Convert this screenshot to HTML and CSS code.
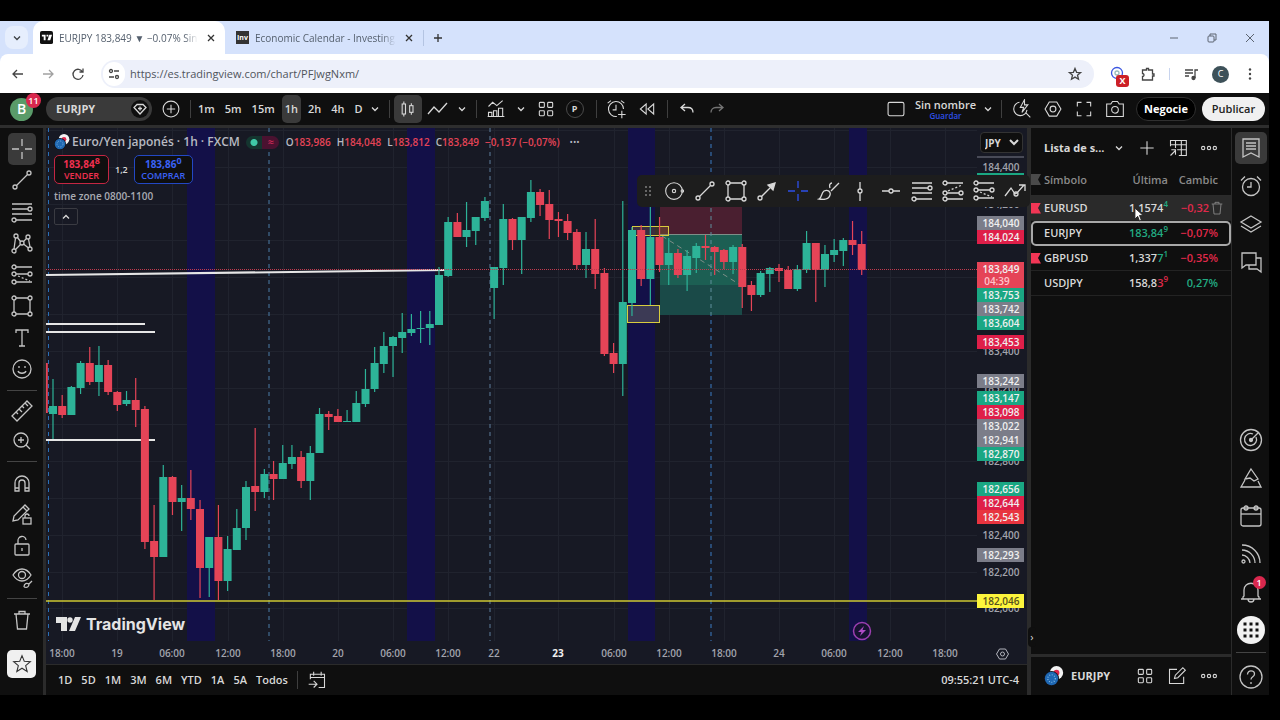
FILE: index.html
```html
<!DOCTYPE html>
<html lang="es">
<head>
  <meta charset="UTF-8" />
  <title>EURJPY 183,849 ▼ −0.07% Sin nombre</title>
  <meta name="viewport" content="width=device-width, initial-scale=1.0" />
  <link rel="stylesheet" href="styles.css">
</head>
<body>
  <svg class="defs" width="0" height="0" aria-hidden="true">
    <symbol id="chev" viewBox="0 0 12 12"><path d="M3 4.5l3 3 3-3" /></symbol>
    <symbol id="i-cross" viewBox="0 0 24 24"><path d="M12 2v7M12 15v7M2 12h7M15 12h7" /></symbol>
    <symbol id="i-line" viewBox="0 0 24 24"><circle cx="5" cy="19" r="2" /><circle cx="19" cy="5" r="2" /><path d="M6.5 17.5l11-11" /></symbol>
    <symbol id="i-fib" viewBox="0 0 24 24"><path d="M2 4h20M2 9h16M2 14h20M6 20h16" /><circle cx="20" cy="9" r="2" /><circle cx="4" cy="20" r="2" /></symbol>
    <symbol id="i-rect" viewBox="0 0 24 24"><path d="M6 4h12M6 20h12M4 6v12M20 6v12" /><circle cx="4" cy="4" r="2" /><circle cx="20" cy="4" r="2" /><circle cx="4" cy="20" r="2" /><circle cx="20" cy="20" r="2" /></symbol>
    <symbol id="i-long" viewBox="0 0 24 24"><circle cx="4" cy="4" r="2" /><circle cx="4" cy="11" r="2" /><circle cx="20" cy="11" r="2" /><circle cx="4" cy="19" r="2" /><path d="M6 4h16M6 11h12M6 19h16" /><path stroke-dasharray="2 2" d="M8 13l12 5" /></symbol>
    <symbol id="i-short" viewBox="0 0 24 24"><circle cx="4" cy="4" r="2" /><circle cx="4" cy="14" r="2" /><circle cx="20" cy="14" r="2" /><circle cx="4" cy="20" r="2" /><path d="M6 4h16M6 14h12M6 20h16" /><path stroke-dasharray="2 2" d="M7 12l14-6" /></symbol>
    <symbol id="i-grid" viewBox="0 0 24 24"><rect x="4" y="4" width="6" height="6" rx="1" /><rect x="14" y="4" width="6" height="6" rx="1" /><rect x="4" y="14" width="6" height="6" rx="1" /><rect x="14" y="14" width="6" height="6" rx="1" /></symbol>
    <symbol id="i-hex" viewBox="0 0 24 24"><path d="M7.500 3.500h9l5 8.500-5 8.500h-9l-5-8.500z" /><circle cx="12" cy="12" r="3.500" /></symbol>
    <symbol id="i-dots" viewBox="0 0 24 24"><circle cx="5" cy="12" r="2" /><circle cx="12" cy="12" r="2" /><circle cx="19" cy="12" r="2" /></symbol>
    <symbol id="i-trash" viewBox="0 0 24 24"><path d="M4 6h16M9 6V3.500h6V6M6 6l1.500 15h9L18 6" /></symbol>
    <symbol id="i-alarm" viewBox="0 0 24 24"><circle cx="12" cy="13" r="8.500" /><path d="M12 8v5H8M2 6.500L6 2.500M22 6.500L18 2.500" /></symbol>
    <symbol id="i-pair" viewBox="0 0 24 24"><g stroke="none"><circle cx="15" cy="8" r="8" fill="#f3f3f3" /><circle cx="15" cy="8" r="3.500" fill="#e0294f" /><circle cx="9" cy="15" r="9" fill="#10131c" /><circle cx="9" cy="15" r="8" fill="#1f68b3" /></g><circle cx="9" cy="15" r="4.500" fill="none" stroke="#9fd0ee" stroke-dasharray="1 2" /></symbol>
  </svg>

  <div class="window">
    <header class="tabstrip">
      <button class="tab-search" aria-label="Buscar pestañas"><svg class="icon s12"><use href="#chev" /></svg></button>
      <div class="tab active">
        <svg class="favicon" viewBox="0 0 14 14"><rect width="14" height="14" rx="2" fill="#111" /><path fill="#fff" d="M2 4h4v6H4V6H2zM7 4h2v2H7zM10 4h3l-2 6H8z" /></svg>
        <span class="tab-title">EURJPY 183,849 ▼ −0.07% Sin</span>
        <button class="tab-close" aria-label="Cerrar"><svg class="icon s12" viewBox="0 0 12 12"><path d="M3 3l6 6M9 3l-6 6" /></svg></button>
      </div>
      <div class="tab">
        <span class="favicon inv">Inv</span>
        <span class="tab-title">Economic Calendar - Investing.</span>
        <button class="tab-close" aria-label="Cerrar"><svg class="icon s12" viewBox="0 0 12 12"><path d="M3 3l6 6M9 3l-6 6" /></svg></button>
      </div>
      <button class="tab-new" aria-label="Nueva pestaña"><svg class="icon s12" viewBox="0 0 12 12"><path d="M6 2v8M2 6h8" /></svg></button>
      <div class="win-controls">
        <button aria-label="Minimizar"><svg class="icon s12" viewBox="0 0 12 12"><path d="M2 6h8" /></svg></button>
        <button aria-label="Restaurar"><svg class="icon s12" viewBox="0 0 12 12"><rect x="2" y="4" width="6" height="6" rx="1" /><path d="M4 4V2h6v6H8" /></svg></button>
        <button aria-label="Cerrar ventana"><svg class="icon s12" viewBox="0 0 12 12"><path d="M2 2l8 8M10 2l-8 8" /></svg></button>
      </div>
    </header>

    <div class="navbar">
      <button aria-label="Atrás"><svg class="icon s16" viewBox="0 0 16 16"><path d="M13 8H3M7 4L3 8l4 4" /></svg></button>
      <button class="dim" aria-label="Adelante"><svg class="icon s16" viewBox="0 0 16 16"><path d="M3 8h10M9 4l4 4-4 4" /></svg></button>
      <button aria-label="Recargar"><svg class="icon s16" viewBox="0 0 16 16"><path d="M12.500 6A5 5 0 1 0 13 9M13 2.500V6H9.500" /></svg></button>
      <div class="omnibox">
        <span class="site-info"><svg class="icon s16" viewBox="0 0 16 16"><circle cx="5" cy="5" r="1.500" /><path d="M8 5h5M3 11h5" /><circle cx="11" cy="11" r="1.500" /></svg></span>
        <input type="text" aria-label="Dirección" value="https://es.tradingview.com/chart/PFJwgNxm/" />
        <button aria-label="Favorito"><svg class="icon s16" viewBox="0 0 16 16"><path d="M8 2.500l1.600 3.800 4 .3-3.100 2.600 1 4L8 11.100l-3.500 2.100 1-4L2.400 6.600l4-.3z" /></svg></button>
      </div>
      <div class="extensions">
        <button class="ext" aria-label="Extensión"><svg class="icon s16" viewBox="0 0 16 16"><circle cx="7" cy="7" r="5.500" stroke="#3a55e0" /><circle cx="7" cy="7" r="2" stroke="#9bb" /></svg><b>X</b></button>
        <button aria-label="Extensiones"><svg class="icon s16" viewBox="0 0 16 16"><path d="M2.500 4h4V2.500h2V4h4v4H14v2h-1.500v4h-10v-3.500c2 0 2-3 0-3z" /></svg></button>
        <i></i>
        <button aria-label="Medios"><svg class="icon s16" viewBox="0 0 16 16"><path d="M2 4h8M2 7h8M2 10h4M12 12V4h3" /><circle cx="10.500" cy="12" r="1.500" fill="currentColor" /></svg></button>
        <button class="profile" aria-label="Perfil">C</button>
        <button aria-label="Menú"><svg class="icon s16" viewBox="0 0 16 16"><g fill="currentColor" stroke="none"><circle cx="8" cy="3.500" r="1.200" /><circle cx="8" cy="8" r="1.200" /><circle cx="8" cy="12.500" r="1.200" /></g></svg></button>
      </div>
    </div>

    <div class="topbar">
      <button class="avatar" aria-label="Menú de usuario">B<span class="badge">11</span></button>
      <button class="symbol">EURJPY <span class="gem"><svg class="icon s16" viewBox="0 0 16 16"><path d="M5 3.500h6l3 3-6 6.500-6-6.500z" /><path d="M8 5.500v4M6 7.500h4" /></svg></span></button>
      <button class="tb wide" aria-label="Comparar"><svg class="icon s20" viewBox="0 0 24 24"><circle cx="12" cy="12" r="9.500" /><path d="M12 7v10M7 12h10" /></svg></button>
      <i class="vsep"></i>
      <div class="intervals">
        <button>1m</button><button>5m</button><button>15m</button><button class="on">1h</button><button>2h</button><button>4h</button><button>D</button>
      </div>
      <button class="tb chev" aria-label="Intervalos"><svg class="icon s12"><use href="#chev" /></svg></button>
      <i class="vsep"></i>
      <button class="tb on" aria-label="Velas"><svg class="icon s20" viewBox="0 0 24 24"><rect x="5" y="6" width="4" height="12" /><path d="M7 3v3M7 18v3M16 5v3M16 16v3" /><rect x="14" y="8" width="4" height="8" /></svg></button>
      <button class="tb wide" aria-label="Línea"><svg class="icon s24" viewBox="0 0 24 24"><path d="M3 17l6-7 5 5 8-9" /></svg></button>
      <button class="tb chev" aria-label="Tipos"><svg class="icon s12"><use href="#chev" /></svg></button>
      <i class="vsep"></i>
      <button class="tb wide" aria-label="Indicadores"><svg class="icon s20" viewBox="0 0 24 24"><path d="M3 9l5-5 5 4 7-6M3 21v-5h4v5zM9 21v-7h4v7zM15 21V11h5v10zM2 21h20" /></svg></button>
      <button class="tb chev" aria-label="Favoritos"><svg class="icon s12"><use href="#chev" /></svg></button>
      <button class="tb wide" aria-label="Diseños"><svg class="icon s20"><use href="#i-grid" /></svg></button>
      <button class="pbtn">P</button>
      <i class="vsep"></i>
      <button class="tb wide" aria-label="Alerta"><svg class="icon s20" viewBox="0 0 24 24"><path d="M13 21A9 9 0 1 1 21 12M12 7v6H8M2 5l4-3M22 5l-4-3M19 14v9M14.500 18.500h9" /></svg></button>
      <button class="tb wide" aria-label="Repetición"><svg class="icon s20" viewBox="0 0 24 24"><path d="M11 6v12l-7-6zM20 6v12l-7-6z" /></svg></button>
      <i class="vsep"></i>
      <button class="tb wide" aria-label="Deshacer"><svg class="icon s16" viewBox="0 0 16 16"><path d="M6 3L2 6.500 6 10M2.500 6.500H9c3 0 5 2 5 5" /></svg></button>
      <button class="tb dim" aria-label="Rehacer"><svg class="icon s16" viewBox="0 0 16 16"><path d="M10 3l4 3.500L10 10M13.500 6.500H7c-3 0-5 2-5 5" /></svg></button>
      <div class="topbar-right">
        <button class="tb" aria-label="Diseño"><svg class="icon s20" viewBox="0 0 24 24"><rect x="2.500" y="4" width="19" height="16" rx="2" /></svg></button>
        <button class="layout-name">Sin nombre<small>Guardar</small></button>
        <button class="tb chev" aria-label="Gestionar diseños"><svg class="icon s12"><use href="#chev" /></svg></button>
        <i class="vsep"></i>
        <button class="tb wide" aria-label="Búsqueda rápida"><svg class="icon s20" viewBox="0 0 24 24"><path d="M9 4a8 8 0 1 0 9 9M17 17l5 5M15 1l-5 9h4l-2 6 7-9h-4z" /></svg></button>
        <button class="tb wide" aria-label="Configuración"><svg class="icon s20"><use href="#i-hex" /></svg></button>
        <button class="tb wide" aria-label="Pantalla completa"><svg class="icon s20" viewBox="0 0 24 24"><path d="M4 9V4h5M15 4h5v5M20 15v5h-5M9 20H4v-5" /></svg></button>
        <button class="tb wide" aria-label="Captura"><svg class="icon s20" viewBox="0 0 24 24"><path d="M2 6h5l2-3h6l2 3h5v15H2z" /><circle cx="12" cy="13" r="4" /></svg></button>
        <button class="pill dark">Negocie</button>
        <button class="pill light">Publicar</button>
      </div>
    </div>

    <div class="workspace">
      <nav class="drawbar">
        <div class="tools g8">
          <button class="on" aria-label="Cruz"><svg class="icon s24"><use href="#i-cross" /></svg></button>
          <button aria-label="Línea de tendencia"><svg class="icon s24"><use href="#i-line" /></svg></button>
          <button aria-label="Fibonacci"><svg class="icon s24"><use href="#i-fib" /></svg></button>
          <button aria-label="Patrones"><svg class="icon s24" viewBox="0 0 24 24"><circle cx="6" cy="5" r="2" /><circle cx="18" cy="6" r="2" /><circle cx="4" cy="20" r="2" /><circle cx="20" cy="18" r="2" /><circle cx="12" cy="12" r="2" /><path d="M5.500 7L4 18M7.500 6.500l3 4M16.500 7.500l-3 3M18.500 8l1.500 8M5.500 18.500l5-5M13.500 13l5 4" /></svg></button>
          <button aria-label="Posición"><svg class="icon s24"><use href="#i-long" /></svg></button>
          <button aria-label="Rectángulo"><svg class="icon s24"><use href="#i-rect" /></svg></button>
          <button aria-label="Texto"><svg class="icon s24" viewBox="0 0 24 24"><path d="M6 7V4h12v3M12 4v16M9 20h6" /></svg></button>
          <button aria-label="Emoji"><svg class="icon s24" viewBox="0 0 24 24"><circle cx="12" cy="12" r="9" /><path d="M9 9v2M15 9v2M8 14c1 3 7 3 8 0" /></svg></button>
        </div>
        <hr>
        <div class="tools g2">
          <button aria-label="Medir"><svg class="icon s24" viewBox="0 0 24 24"><path d="M2 17L17 2l5 5L7 22zM6 13l2 2M9 10l3 3M12 7l2 2M15 4l3 3" /></svg></button>
          <button aria-label="Acercar"><svg class="icon s24" viewBox="0 0 24 24"><circle cx="11" cy="11" r="7" /><path d="M16 16l4 4M11 8v6M8 11h6" /></svg></button>
        </div>
        <hr>
        <div class="tools g4">
          <button aria-label="Imán"><svg class="icon s24" viewBox="0 0 24 24"><path d="M5 20v-8a7 7 0 0 1 14 0v8h-4v-8a3 3 0 0 0-6 0v8zM5 17h4M15 17h4" /></svg></button>
          <button aria-label="Modo dibujo"><svg class="icon s24" viewBox="0 0 24 24"><path d="M3 19l1-5L15 3l4 4L8 18zM13 5l4 4" /><rect x="13" y="16" width="8" height="6" /><path d="M15 16v-2a2 2 0 0 1 4 0" /></svg></button>
          <button aria-label="Bloquear"><svg class="icon s24" viewBox="0 0 24 24"><rect x="5" y="10" width="14" height="11" rx="1" /><path d="M8 10V7a4 4 0 0 1 8-1M12 14v3" /></svg></button>
          <button aria-label="Ocultar"><svg class="icon s24" viewBox="0 0 24 24"><path d="M3 10c5-8 13-8 18 0-5 8-13 8-18 0z" /><circle cx="12" cy="10" r="3.500" /><path d="M14 22c0-4 3-4 5-3l3-3M14 22c3 1 5 0 5-3" /></svg></button>
        </div>
        <hr>
        <div class="tools g1"><button aria-label="Eliminar"><svg class="icon s24"><use href="#i-trash" /></svg></button></div>
        <button class="fav" aria-label="Favoritos"><svg class="icon s20" viewBox="0 0 24 24"><path d="M12 2l2.700 6.700 7.300.5-5.600 4.700 1.800 7.100-6.200-3.900L5.800 21l1.800-7.100L2 9.200l7.300-.5z" /></svg></button>
      </nav>

      <main class="chart-col">
        <div class="chart">
          <svg id="chart" viewBox="46 128 981 536" role="img" aria-label="Gráfico EURJPY 1h"></svg>

          <div class="legend">
            <div class="legend-row">
              <svg class="icon s16"><use href="#i-pair" /></svg>
              <span class="legend-title">Euro/Yen japonés · 1h · FXCM</span>
              <span class="status"><i class="dot"></i><i class="wave">≈</i></span>
              <span class="ohlc">O<b>183,986</b></span>
              <span class="ohlc">H<b>184,048</b></span>
              <span class="ohlc">L<b>183,812</b></span>
              <span class="ohlc">C<b>183,849</b></span>
              <span class="ohlc"><b>−0,137 (−0,07%)</b></span>
              <span class="more">•••</span>
            </div>
            <div class="trade-row">
              <button class="trade sell"><b>183,84<sup>8</sup></b>VENDER</button>
              <span>1,2</span>
              <button class="trade buy"><b>183,86<sup>0</sup></b>COMPRAR</button>
            </div>
            <span class="study">time zone 0800-1100</span>
            <button class="collapse" aria-label="Contraer"><svg class="icon s12" viewBox="0 0 12 12"><path d="M3 7.500l3-3 3 3" /></svg></button>
          </div>

          <select class="currency" aria-label="Moneda"><option>JPY</option></select>

          <div class="floatbar">
            <span class="grip"></span>
            <button aria-label="Círculo"><svg class="icon s20" viewBox="0 0 24 24"><circle cx="12" cy="12" r="10" /><circle cx="12" cy="12" r="2" /><circle cx="22" cy="12" r="1.500" /></svg></button>
            <button aria-label="Línea"><svg class="icon s24"><use href="#i-line" /></svg></button>
            <button aria-label="Rectángulo"><svg class="icon s24"><use href="#i-rect" /></svg></button>
            <button aria-label="Flecha"><svg class="icon s24" viewBox="0 0 24 24"><circle cx="5" cy="19" r="2" /><path d="M6.500 17.500L15 9" /><path fill="currentColor" d="M20 4l-2 7-5-5z" /></svg></button>
            <button class="blue" aria-label="Cruz"><svg class="icon s24"><use href="#i-cross" /></svg></button>
            <button aria-label="Pincel"><svg class="icon s24" viewBox="0 0 24 24"><path d="M2 20c3-1 2-6 5-8 4-2 7 1 6 4-1 4-6 5-11 4zM13 9c-1-3 0-5 2-5M14 12l8-8" /></svg></button>
            <button aria-label="Línea vertical"><svg class="icon s24" viewBox="0 0 24 24"><path d="M12 3v7M12 14v8" /><circle cx="12" cy="12" r="2" /></svg></button>
            <button aria-label="Línea horizontal"><svg class="icon s24" viewBox="0 0 24 24"><path d="M3 12h7M14 12h7" /><circle cx="12" cy="12" r="2" /></svg></button>
            <button aria-label="Fibonacci"><svg class="icon s24"><use href="#i-fib" /></svg></button>
            <button aria-label="Posición larga"><svg class="icon s24"><use href="#i-short" /></svg></button>
            <button aria-label="Posición corta"><svg class="icon s24"><use href="#i-long" /></svg></button>
            <button aria-label="Trayectoria"><svg class="icon s24" viewBox="0 0 24 24"><path d="M2 17l6-8 4 6 2-1 7-8M16 6h6v6" /><circle cx="13" cy="15" r="2" /></svg></button>
          </div>

          <div class="brand">
            <svg viewBox="0 0 25 14"><path d="M0 0h11v14H5V6H0zM19 0h6l-6 14h-6z" /><circle cx="14" cy="3" r="2.700" /></svg>
            TradingView
          </div>
        </div>

        <div class="rangebar">
          <button>1D</button><button>5D</button><button>1M</button><button>3M</button><button>6M</button><button>YTD</button><button>1A</button><button>5A</button><button>Todos</button>
          <i class="vsep"></i>
          <button aria-label="Ir a fecha"><svg class="icon s20" viewBox="0 0 24 24"><path d="M4 11V5h17v16h-7M4 9h17M8 2v5M17 2v5M2 17h9M8 13l4 4-4 4" /></svg></button>
          <time>09:55:21 UTC-4</time>
        </div>
      </main>

      <aside class="watchlist">
        <button class="handle" aria-label="Plegar panel">›</button>
        <div class="wl-head">
          <button class="wl-name">Lista de s...</button>
          <button aria-label="Listas"><svg class="icon s12"><use href="#chev" /></svg></button>
          <button aria-label="Añadir"><svg class="icon s20" viewBox="0 0 24 24"><path d="M12 4v16M4 12h16" /></svg></button>
          <button aria-label="Tabla"><svg class="icon s20" viewBox="0 0 24 24"><path d="M3 10V3h19v18h-9M3 8h19M9 3v9M16 3v18M11 14h11M3 21l6-6M4 14h5v6" /></svg></button>
          <button aria-label="Más"><svg class="icon s20"><use href="#i-dots" /></svg></button>
        </div>
        <table>
          <thead>
            <tr><th class="flag grey"><i></i></th><th class="sym">Símbolo</th><th>Última</th><th class="chg">Cambic</th></tr>
          </thead>
          <tbody>
            <tr class="hover"><td class="flag"><i></i></td><td class="sym">EURUSD</td><td>1,1574<sup class="up">4</sup></td><td class="chg down"><span>−0,32</span><button class="del" aria-label="Quitar"><svg class="icon s16"><use href="#i-trash" /></svg></button></td></tr>
            <tr class="selected"><td></td><td class="sym">EURJPY</td><td class="up">183,84<sup>9</sup></td><td class="chg down">−0,07%</td></tr>
            <tr><td class="flag"><i></i></td><td class="sym">GBPUSD</td><td>1,337<span class="up">7<sup>1</sup></span></td><td class="chg down">−0,35%</td></tr>
            <tr><td></td><td class="sym">USDJPY</td><td>158,8<span class="down">3<sup>9</sup></span></td><td class="chg up">0,27%</td></tr>
          </tbody>
        </table>
        <svg class="cursor" viewBox="0 0 12 16"><path fill="#fff" stroke="#222" d="M1 1v12l3-3 2 5 2-1-2-5h4z" /></svg>
        <div class="wl-foot">
          <svg class="icon s20"><use href="#i-pair" /></svg>
          <span class="wl-foot-name">EURJPY</span>
          <button aria-label="Cuadrícula"><svg class="icon s20"><use href="#i-grid" /></svg></button>
          <button aria-label="Notas"><svg class="icon s20" viewBox="0 0 24 24"><path d="M12 4H3v17h17v-8M9 15l1-4 9-9 3 3-9 9z" /></svg></button>
          <button aria-label="Más"><svg class="icon s20"><use href="#i-dots" /></svg></button>
        </div>
      </aside>

      <nav class="sidebar">
        <div class="side-group">
          <button class="on" aria-label="Lista"><svg class="icon s24" viewBox="0 0 24 24"><path d="M4 3h16v18l-8-4-8 4zM7 7h10M7 10h10M7 13h10" /></svg></button>
          <button aria-label="Alertas"><svg class="icon s24"><use href="#i-alarm" /></svg></button>
          <button aria-label="Capas"><svg class="icon s24" viewBox="0 0 24 24"><path d="M12 4l10 6-10 6L2 10zM2 14l10 6 10-6" /></svg></button>
          <button aria-label="Chat"><svg class="icon s24" viewBox="0 0 24 24"><path d="M3 3h14v12H7l-4 3zM17 8h5v14l-4-3h-8v-4" /></svg></button>
        </div>
        <div class="side-group bottom">
          <button aria-label="Screeners"><svg class="icon s24" viewBox="0 0 24 24"><circle cx="12" cy="12" r="10.500" /><path d="M17 9a6 6 0 1 1-3-3M12 12l8-8" /><circle cx="12" cy="12" r="1.500" fill="currentColor" /></svg></button>
          <button aria-label="Pine"><svg class="icon s24" viewBox="0 0 24 24"><path d="M12 3l7 10-4 2-4-3-5 1zM6 14l-4 7h20l-3-6" /></svg></button>
          <button aria-label="Calendario"><svg class="icon s24" viewBox="0 0 24 24"><rect x="2" y="4" width="20" height="18" rx="2" /><path d="M2 10h20" /><circle cx="7" cy="4" r="2" /><circle cx="17" cy="4" r="2" /></svg></button>
          <button aria-label="Noticias"><svg class="icon s24" viewBox="0 0 24 24"><path d="M3 3c10 0 18 8 18 18M3 8c7 0 13 6 13 13M3 13c4 0 8 4 8 8" /><circle cx="4.500" cy="19.500" r="1.500" /></svg></button>
          <button aria-label="Notificaciones"><svg class="icon s24" viewBox="0 0 24 24"><path d="M2 19h20M4 19v-2l1-1v-6c0-9 14-9 14 0v6l1 1v2M9 19c0 4 6 4 6 0" /></svg><span class="badge">1</span></button>
          <button class="apps" aria-label="Productos"><svg viewBox="0 0 28 28"><circle cx="14" cy="14" r="14" fill="#f2f2f2" /><path stroke="#111" stroke-width="3" stroke-dasharray="3 3" d="M6.500 8h15M6.500 14h15M6.500 20h15" /></svg></button>
        </div>
        <hr>
        <button class="help" aria-label="Ayuda"><svg class="icon s24" viewBox="0 0 24 24"><circle cx="12" cy="12" r="11" /><path d="M8.500 9.500c0-5 7-4.500 7-.5 0 3-3.500 2.500-3.500 5.500M12 17v2" /></svg></button>
      </nav>
    </div>
  </div>

  <script src="script.js"></script>
</body>
</html>
```

FILE: styles.css
```css
* {
  box-sizing: border-box;
  margin: 0;
  padding: 0;
}

body {
  background: #000;
  color: #d8d8d8;
  font-family: "Trebuchet MS", "Open Sans", sans-serif;
  font-size: 11px;
  line-height: 16px;
  min-height: 100vh;
  padding: 21px 11px 25px 0;
  display: flex;
}

button, input, select {
  font: inherit;
  color: inherit;
  background: none;
  border: none;
}

button {
  display: flex;
  align-items: center;
  justify-content: center;
  cursor: pointer;
}

.defs {
  position: absolute;
}

.icon {
  fill: none;
  stroke: currentColor;
  stroke-width: 1.3;
  flex: none;
  display: block;
}

.s12 { width: 12px; height: 12px; }
.s16 { width: 16px; height: 16px; }
.s20 { width: 20px; height: 20px; }
.s24 { width: 24px; height: 24px; }

.window {
  flex: 1;
  min-width: 0;
  display: flex;
  flex-direction: column;
}

/* browser tabs */
.tabstrip {
  height: 33px;
  background: #d5e2fc;
  display: flex;
  align-items: center;
  padding-left: 5px;
  color: #3c4043;
  font-family: "Open Sans", sans-serif;
}

.tab-search {
  width: 23px;
  height: 23px;
  border-radius: 8px;
  background: #e6eefd;
}

.tab {
  display: flex;
  align-items: center;
  gap: 6px;
  height: 28px;
  width: 198px;
  padding: 0 7px 0 11px;
  color: #55606e;
  font-size: 10px;
}

.tab.active {
  width: 192px;
  height: 33px;
  padding: 0 7px;
  margin: 0 0 0 5px;
  background: #fff;
  border-radius: 10px 10px 0 0;
}

.tab-title {
  flex: 1;
  overflow: hidden;
  white-space: nowrap;
  mask-image: linear-gradient(90deg, #000 90%, transparent);
}

.favicon {
  width: 13px;
  height: 13px;
  flex: none;
}

.favicon.inv {
  background: #333;
  color: #fff;
  font-size: 7px;
  line-height: 13px;
  font-weight: 700;
  text-align: center;
}

.tab-close, .tab-new {
  color: #333;
  width: 14px;
  height: 16px;
}

.tab-new {
  border-left: 1px solid #b4c4e2;
  width: 28px;
}

.win-controls {
  margin-left: auto;
  display: flex;
  color: #5c6470;
}

.win-controls button {
  width: 38px;
}

.win-controls .icon {
  stroke-width: 1;
}

/* address bar */
.navbar {
  height: 39px;
  background: #fff;
  color: #444;
  display: flex;
  align-items: center;
  padding: 1px 0 0 3px;
  border-radius: 8px 8px 0 0;
  box-shadow: 0 -8px #d5e2fc;
  font-family: "Open Sans", sans-serif;
}

.tabstrip {
  position: relative;
}

.navbar > button {
  width: 30px;
  height: 28px;
}

.dim {
  opacity: 0.5;
}

.omnibox {
  flex: 1;
  height: 28px;
  margin-left: 8px;
  border-radius: 14px;
  background: #edf0fa;
  display: flex;
  align-items: center;
  padding: 0 11px 0 2px;
}

.site-info {
  width: 22px;
  height: 24px;
  border-radius: 12px;
  background: #fff;
  display: flex;
  align-items: center;
  justify-content: center;
}

.omnibox input {
  flex: 1;
  padding-left: 5px;
  color: #50545c;
}

.extensions {
  display: flex;
  align-items: center;
  padding-left: 9px;
}

.extensions button {
  width: 30px;
  height: 24px;
  position: relative;
}

.extensions i {
  width: 1px;
  height: 12px;
  margin: 0 6px;
  background: #c8d4ee;
}

.ext b {
  position: absolute;
  right: 4px;
  bottom: -1px;
  width: 13px;
  height: 12px;
  border-radius: 3px;
  background: #cc2027;
  color: #fff;
  font-size: 9px;
  line-height: 12px;
}

.extensions .profile {
  width: 17px;
  height: 17px;
  margin: 0 6px;
  border-radius: 50%;
  background: #3d5159;
  color: #fff;
  font-size: 9px;
}

.extensions button:last-child {
  margin: 0 4px 0 0;
}

/* chart header */
.topbar {
  height: 35px;
  background: #0f0f0f;
  border-bottom: 3px solid #2e2e2e;
  display: flex;
  align-items: center;
  padding: 0 4px 0 10px;
}

.avatar {
  position: relative;
  width: 23px;
  height: 23px;
  margin-right: 13px;
  border-radius: 50%;
  background: #5a9b69;
  color: #fff;
  font-size: 14px;
  font-weight: 600;
}

.badge {
  position: absolute;
  left: 16px;
  top: -5px;
  min-width: 15px;
  height: 15px;
  border-radius: 8px;
  background: #d9284e;
  color: #fff;
  font-size: 9px;
  line-height: 15px;
  font-weight: 600;
}

.symbol {
  width: 106px;
  height: 24px;
  margin-right: 3px;
  padding: 0 3px 0 10px;
  border-radius: 12px;
  background: #3a3a3a;
  justify-content: space-between;
  font-weight: 700;
}

.gem {
  width: 18px;
  height: 18px;
  border-radius: 50%;
  background: #0f0f0f;
  display: flex;
  align-items: center;
  justify-content: center;
}

.tb {
  width: 28px;
  height: 28px;
}

.tb.wide {
  width: 31px;
}

.tb.chev {
  width: 19px;
}

.on {
  background: #3a3a3a;
  border-radius: 5px;
}

.vsep {
  width: 1px;
  height: 18px;
  margin: 0 4px;
  background: #3f3f3f;
  flex: none;
}

.intervals {
  display: flex;
  gap: 4px;
  font-weight: 600;
}

.intervals button {
  height: 28px;
  padding: 0 3px;
}

.pbtn {
  width: 18px;
  height: 18px;
  margin: 0 8px 0 4px;
  border: 1px solid #4a4a4a;
  border-radius: 50%;
  font-size: 9px;
  font-weight: 700;
}

.topbar-right {
  margin-left: auto;
  display: flex;
  align-items: center;
}

.layout-name {
  flex-direction: column;
  margin: 0 2px 0 5px;
  font-weight: 600;
  line-height: 12px;
}

.layout-name small {
  color: #2d4fe8;
  font-size: 8px;
  line-height: 9px;
  font-weight: 600;
}

.pill {
  height: 24px;
  width: 63px;
  border-radius: 12px;
  margin-left: 6px;
}

.pill.dark {
  width: 60px;
  background: #000;
  border: 1px solid #303030;
  color: #fff;
  font-weight: 700;
}

.pill.light {
  background: #f0f0f0;
  color: #222;
  font-weight: 600;
}

/* body */
.workspace {
  flex: 1;
  display: flex;
  min-height: 0;
}

.drawbar {
  width: 46px;
  background: #0f0f0f;
  border-right: 3px solid #2b2b2b;
  padding-top: 5px;
  display: flex;
  flex-direction: column;
  align-items: center;
  color: #c4c4c4;
}

.tools {
  display: flex;
  flex-direction: column;
}

.tools button {
  flex: 1;
  width: 28px;
}

.g8 { height: 252px; }
.g2 { height: 60px; }
.g4 { height: 126px; }
.g1 { height: 32px; }

.drawbar hr, .sidebar hr {
  width: 30px;
  height: 1px;
  margin: 5px 0;
  border: none;
  background: #444;
}

.fav {
  width: 29px;
  height: 28px;
  margin-top: 14px;
  border-radius: 5px;
  background: #f0f0f0;
  color: #333;
}

.chart-col {
  flex: 1;
  min-width: 0;
  display: flex;
  flex-direction: column;
}

.chart {
  flex: 1;
  min-height: 0;
  position: relative;
  background: #171924;
}

#chart {
  display: block;
  width: 100%;
  height: 100%;
}

#chart text {
  font-size: 10px;
  font-weight: 600;
  fill: #a2a4ad;
  text-anchor: middle;
}

#chart .strong {
  font-weight: 700;
  fill: #f0f0f0;
}

#chart .tag {
  fill: #f0f0f0;
}

#chart .countdown {
  fill: #ffc4cb;
}

#chart .dark {
  fill: #55511c;
}

.legend {
  position: absolute;
  left: 8px;
  top: 5px;
  display: flex;
  flex-direction: column;
  align-items: flex-start;
}

.legend-row {
  display: flex;
  align-items: center;
  gap: 6px;
  height: 18px;
  white-space: nowrap;
  color: #b8bac2;
}

.legend-row > .icon {
  margin-right: -4px;
}

.legend-title {
  font-size: 12px;
  font-weight: 600;
}

.status {
  width: 33px;
  height: 13px;
  margin-right: 1px;
  border-radius: 7px;
  overflow: hidden;
  display: flex;
}

.status i {
  flex: 1;
  font-style: normal;
  line-height: 12px;
  text-align: center;
}

.dot {
  background: radial-gradient(circle, #3fc8a6 3px, #14352f 4px);
}

.wave {
  background: #4a1230;
  color: #e0305f;
}

.ohlc {
  font-size: 10px;
  font-weight: 600;
}

.ohlc b {
  font-weight: 600;
  color: #e54457;
}

.more {
  margin-left: 4px;
  font-size: 9px;
}

.trade-row {
  display: flex;
  align-items: center;
  gap: 6px;
  margin-top: 4px;
  font-size: 9px;
  font-weight: 600;
}

.trade {
  width: 55px;
  height: 29px;
  flex-direction: column;
  border: 1px solid #c42643;
  border-radius: 5px;
  background: #0f0f0f;
  color: #f0304f;
  line-height: 12px;
}

.trade b {
  font-size: 10px;
  font-weight: 700;
}

.trade sup {
  font-size: 9px;
  line-height: 0;
}

.trade.buy {
  width: 59px;
  border-color: #2348c4;
  color: #3b62f5;
}

.study {
  margin-top: 4px;
  font-size: 10px;
  font-weight: 600;
  color: #a9abb3;
}

.collapse {
  width: 24px;
  height: 17px;
  margin-top: 4px;
  border: 1px solid #3a3b42;
  border-radius: 2px;
}

.currency {
  position: absolute;
  right: 4px;
  top: 4px;
  width: 43px;
  height: 21px;
  border: 1px solid #333;
  border-radius: 4px;
  background: #0f0f0f;
  font-size: 10px;
  font-weight: 700;
}

.floatbar {
  position: absolute;
  right: -3px;
  top: 47px;
  height: 32px;
  padding-left: 7px;
  display: flex;
  align-items: center;
  background: #1d1d1d;
  border-radius: 5px;
  z-index: 2;
}

.floatbar button {
  width: 31px;
  height: 28px;
}

.grip {
  width: 8px;
  height: 12px;
  margin-right: 6px;
  background: radial-gradient(#666 1px, transparent 1px) 0 0 / 4px 4px;
}

.floatbar .blue {
  color: #2d4fe8;
}

.brand {
  position: absolute;
  left: 10px;
  bottom: 28px;
  display: flex;
  align-items: center;
  gap: 5px;
  color: #e4e4e4;
  font-family: Inter, sans-serif;
  font-size: 16px;
  line-height: 24px;
  font-weight: 700;
}

.brand svg {
  width: 25px;
  height: 14px;
  fill: currentColor;
}

.rangebar {
  height: 31px;
  background: #0f0f0f;
  border-top: 1px solid #2b2b2b;
  display: flex;
  align-items: center;
  gap: 9px;
  padding: 0 8px 0 12px;
  font-weight: 600;
}

.rangebar .vsep {
  margin: 0;
}

.rangebar time {
  margin-left: auto;
}

/* watchlist */
.watchlist {
  position: relative;
  width: 205px;
  background: #0f0f0f;
  border-left: 4px solid #2b2b2b;
  border-right: 1px solid #2b2b2b;
  display: flex;
  flex-direction: column;
}

.handle {
  position: absolute;
  left: -3px;
  bottom: 48px;
  width: 8px;
  height: 20px;
  border-radius: 4px;
  background: #0f0f0f;
}

.wl-head {
  height: 39px;
  padding: 0 7px 0 13px;
  display: flex;
  align-items: center;
}

.wl-head button {
  width: 31px;
  height: 28px;
}

.wl-head .wl-name {
  flex: 1;
  justify-content: flex-start;
  font-weight: 700;
  white-space: nowrap;
}

.wl-head .wl-name + button {
  width: 24px;
}

.watchlist table {
  width: 100%;
  table-layout: fixed;
  border-collapse: separate;
  border-spacing: 0;
}

.watchlist th {
  height: 29px;
  padding-bottom: 3px;
  border-bottom: 1px solid #2b2b2b;
  color: #8a8a8a;
  font-weight: 600;
  text-align: right;
}

.watchlist td {
  height: 25px;
  border-bottom: 1px solid #232323;
  font-weight: 600;
  text-align: right;
}

.watchlist .flag {
  width: 13px;
}

.watchlist .sym {
  width: 58px;
  text-align: left;
}

.flag i {
  display: block;
  width: 10px;
  height: 11px;
  background: #f23655;
  clip-path: polygon(0 0, 100% 0, 70% 50%, 100% 100%, 0 100%);
}

.flag.grey i {
  background: #4a4a4a;
}

.watchlist .chg {
  position: relative;
  width: 63px;
  padding-right: 13px;
}

.chg span {
  padding-right: 9px;
}

.watchlist sup {
  font-size: 8px;
  line-height: 0;
}

.up { color: #22ab82; }
.watchlist .down { color: #e0294a; }

.hover td {
  background: #2a2a2a;
}

.del {
  position: absolute;
  right: 6px;
  top: 2px;
  width: 16px;
  height: 20px;
  color: #8a8a8a;
}

.selected {
  outline: 2px solid #a8a8a8;
  outline-offset: -2px;
  border-radius: 5px;
}

.selected td {
  border-bottom-color: transparent;
}

.cursor {
  position: absolute;
  left: 103px;
  top: 79px;
  width: 11px;
  height: 15px;
}

.wl-foot {
  height: 41px;
  margin-top: auto;
  padding: 0 6px 0 13px;
  border-top: 3px solid #2b2b2b;
  display: flex;
  align-items: center;
}

.wl-foot-name {
  flex: 1;
  padding-left: 7px;
  font-weight: 700;
}

.wl-foot button {
  width: 32px;
  height: 28px;
}

/* right sidebar */
.sidebar {
  width: 37px;
  background: #0f0f0f;
  display: flex;
  flex-direction: column;
  align-items: center;
  padding-top: 1px;
  color: #c4c4c4;
}

.side-group button {
  position: relative;
  width: 32px;
  height: 38px;
}

.side-group .on {
  height: 32px;
  margin: 3px 0;
}

.side-group.bottom {
  margin-top: auto;
}

.side-group .badge {
  left: 18px;
  top: 3px;
  min-width: 13px;
  height: 13px;
  line-height: 13px;
}

.apps svg {
  width: 28px;
  height: 28px;
}

.sidebar hr {
  margin: 3px 0 6px;
}

.help {
  height: 36px;
}
```

FILE: script.js
```js
const UP = "#2db398";
const DOWN = "#e54457";

// [direction, high, body top, body bottom, low], one hour each
const candles = [
  [0,363,363,413,413],[1,379,406,414,439],[0,395,406,415,418],[1,386,387,415,415],[1,361,363,388,394],
  [0,347,363,382,385],[1,346,365,382,396],[0,360,365,392,395],[0,391,392,405,411],[1,391,400,404,406],
  [0,378,400,410,427],[0,406,409,542,549],[0,505,541,557,600],[1,465,477,557,557],[0,476,477,502,515],
  [1,485,498,502,531],[0,470,498,509,520],[0,500,509,568,598],[1,537,537,568,597],[0,505,537,581,600],
  [1,536,549,581,591],[1,509,528,550,550],[1,481,487,528,540],[0,428,486,492,511],[1,469,474,492,498],
  [0,461,474,479,500],[1,445,463,479,479],[1,445,457,464,469],[0,451,457,481,488],[1,446,453,481,500],
  [1,408,414,453,453],[0,411,414,417,430],[0,409,416,422,422],[1,410,421,422,422],[1,391,403,422,422],
  [1,369,389,404,407],[1,347,363,389,392],[1,332,346,364,373],[1,336,337,346,377],[1,313,332,338,353],
  [1,314,329,333,336],[1,311,328,329,343],[1,311,324,328,345],[1,267,275,325,325],[1,217,222,276,277],
  [0,213,222,237,237],[1,202,230,237,247],[1,217,217,231,245],[1,197,201,218,221],[1,267,267,288,319],
  [1,204,219,268,285],[0,218,219,240,250],[1,217,217,240,274],[1,180,192,218,222],[0,189,192,205,216],
  [0,190,204,220,239],[0,212,219,221,237],[0,214,221,233,240],[0,229,232,265,269],[1,232,249,265,278],
  [0,219,249,274,289],[0,268,273,354,356],[0,343,353,364,373],[1,201,302,364,396],[1,227,230,303,316],
  [0,225,230,279,286],[1,206,237,279,305],[0,217,237,265,272],[1,238,253,265,285],[0,249,253,275,278],
  [1,250,256,275,291],[1,243,246,258,273],[0,235,246,248,260],[0,246,247,252,275],[0,249,250,262,269],
  [1,245,247,262,274],[0,244,247,287,308],[0,281,285,295,311],[1,271,273,295,297],[1,267,268,274,292],
  [0,264,268,271,282],[0,266,270,289,289],[1,265,269,289,291],[1,231,243,270,273],[0,243,243,270,302],
  [1,245,254,270,287],[1,239,250,255,262],[1,238,240,251,266],[0,221,240,245,255],[0,231,244,270,275]
];

const times = [
  [62,"18:00"],[117,"19"],[172,"06:00"],[228,"12:00"],[283,"18:00"],[338,"20"],[393,"06:00"],[448,"12:00"],
  [494,"22"],[558,"23"],[614,"06:00"],[669,"12:00"],[724,"18:00"],[779,"24"],[834,"06:00"],[890,"12:00"],[945,"18:00"]
];

const scale = [[167,"184,400"],[204,"184,200"],[351,"183,400"],[388,"183,200"],[461,"182,800"],[535,"182,400"],[572,"182,200"],[608,"182,000"]];

const GREY = "#7b7d89", GREEN = "#1aa783", CRIMSON = "#df1f49", RED = "#e8343f";
const tags = [
  [223,"184,040",GREY],[237,"184,024",CRIMSON],[295,"183,753",GREEN],[309,"183,742",GREY],[323,"183,604",GREEN],
  [342,"183,453",CRIMSON],[381,"183,242",GREY],[398,"183,147",GREEN],[412,"183,098",CRIMSON],[426,"183,022",GREY],
  [440,"182,941",GREY],[454,"182,870",GREEN],[489,"182,656",GREEN],[503,"182,644",CRIMSON],[517,"182,543",RED],[555,"182,293",GREY]
];

const rect = (x, y, w, h, fill, extra = "") => `<rect x="${x}" y="${y}" width="${w}" height="${h}" fill="${fill}" ${extra}/>`;
const line = (x1, y1, x2, y2, stroke, extra = "") => `<line x1="${x1}" y1="${y1}" x2="${x2}" y2="${y2}" stroke="${stroke}" ${extra}/>`;

let out = "";

// grid
for (const [x] of times) out += line(x + 0.5, 128, x + 0.5, 641, "#20232e");
for (let y = 130; y < 641; y += 36.8) out += line(46, Math.round(y) + 0.5, 977, Math.round(y) + 0.5, "#20232e");

// sessions
for (const [x, w] of [[187, 28], [407, 28], [628, 27], [849, 18]]) out += rect(x, 128, w, 513, "#131048");

// day breaks
for (const [x, c] of [[48.5, "#2a6fb5"], [269, "#4d7fa8"], [490, "#5f7f9c"], [711, "#3a7cc4"]]) {
  out += line(x, 128, x, 641, c, 'stroke-dasharray="4 4"');
}

// position and zones
out += rect(660, 200, 82, 34, "#4a1f30");
out += rect(660, 234, 82, 81, "#1a4a48");
out += rect(660, 234, 82, 51, "#1c5f53");
out += line(660, 234.5, 742, 234.5, "#7d8f88");
out += line(662, 236, 742, 286, "#7d8f88", 'stroke-dasharray="5 4"');
out += line(711, 200, 711, 315, "#5f8f9c", 'stroke-dasharray="4 4"');
out += rect(632.5, 226.5, 36, 9, "#8a6a3055", 'stroke="#d8cc3e"');
out += rect(627.5, 305.5, 32, 17, "#3c3a55", 'stroke="#d8cc3e"');

// levels
out += line(46, 275, 446, 270, "#e6e6e6", 'stroke-width="2"');
for (const [y, x] of [[324, 145], [332, 155], [440, 155]]) out += line(46, y, x, y, "#e6e6e6", 'stroke-width="2"');
out += line(46, 601, 977, 601, "#cfc832", 'stroke-width="1.5"');

// candles
candles.forEach(([dir, high, top, bottom, low], i) => {
  const x = 53 + 9.19 * (i - 1);
  const c = dir ? UP : DOWN;
  out += line(x, high, x, low, c, 'stroke-width="1.2"');
  out += rect((x - 4).toFixed(1), top, 8, Math.max(bottom - top, 1), c);
});
out += line(46, 269.5, 977, 269.5, "#c23a4e", 'stroke-dasharray="1 1"');

// price scale
for (const [y, label] of scale) out += `<text x="1001" y="${y + 4}">${label}</text>`;
out += line(977, 157, 1024, 157, GREY) + line(977, 174, 1024, 174, GREEN, 'stroke-width="2"');
for (const [y, label, fill] of tags) {
  out += rect(977, y - 7, 47, 14, fill) + `<text class="tag" x="1001" y="${y + 4}">${label}</text>`;
}
out += rect(977, 262, 47, 26, "#e54457") + `<text class="tag" x="1001" y="273">183,849</text><text class="countdown" x="997" y="285">04:39</text>`;
out += rect(977, 594, 47, 14, "#fdf53c") + `<text class="dark" x="1001" y="605">182,046</text>`;

// time scale
for (const [x, label] of times) out += `<text x="${x}" y="657"${label === "23" ? ' class="strong"' : ""}>${label}</text>`;
out += `<path fill="none" stroke="#b3b5bd" d="M999.500 649h6l3 5-3 5h-6l-3-5z"/><circle cx="1002.500" cy="654" r="2" fill="none" stroke="#b3b5bd"/>`;
out += `<circle cx="862" cy="631" r="8.500" fill="#171232" stroke="#9b3fb0" stroke-width="1.500"/><path fill="#b04cc6" d="M864 626l-6 6h3.500l-1.500 4 6-6h-3.500z"/>`;

document.getElementById("chart").innerHTML = out;
```
